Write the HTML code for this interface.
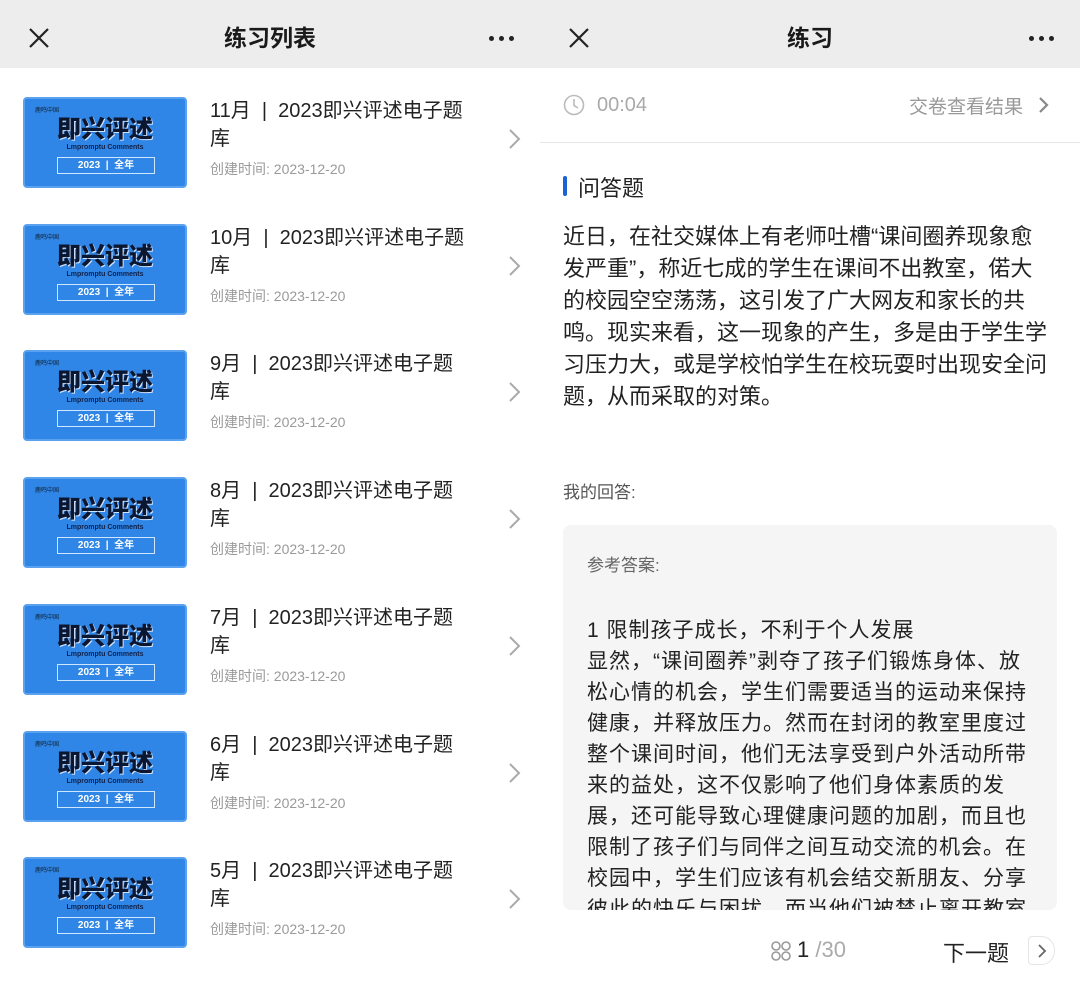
<!DOCTYPE html>
<html><head><meta charset="utf-8"><style>
*{margin:0;padding:0;box-sizing:border-box}
body{width:1080px;height:979px;overflow:hidden;background:#fff;font-family:"Liberation Sans","Noto Sans CJK SC",sans-serif;position:relative;color:#222}
.hdr{position:absolute;top:0;height:68px;background:#ededed}
.hdr .t{position:absolute;top:0;width:100%;text-align:center;line-height:76px;font-size:23px;font-weight:bold;color:#1a1a1a}
.x{position:absolute;left:28px;top:27px}
.dots{position:absolute;right:26px;top:36px;display:flex;gap:5px}
.dots i{width:5px;height:5px;border-radius:50%;background:#222;display:block}
.row{position:absolute;left:0;width:540px;height:127px}
.th{position:absolute;left:23px;top:0;width:164px;height:91px;background:#2f86e6;border:2px solid #5aa2ef;border-radius:4px;text-align:center;color:#0d1b3a}
.th .s{position:absolute;left:10px;top:6px;font-size:6px;color:#123}
.th .b{position:absolute;left:0;right:0;top:17px;font-size:24px;line-height:28px;font-weight:900;color:#0b1630;text-shadow:1px 1px 0 #cfe3ff}
.th .e{position:absolute;left:0;right:0;top:45px;font-size:7px;line-height:8px;font-weight:bold;color:#10204a}
.th .bx{position:absolute;left:32px;top:58px;width:98px;height:17px;border:1px solid #cfe6ff;color:#fff;font-size:10px;font-weight:bold;line-height:15px}
.ti{position:absolute;left:210px;top:0;width:300px;font-size:20px;line-height:28px;color:#222;white-space:nowrap}
.dt{position:absolute;left:210px;top:62px;font-size:14px;color:#9a9a9a}
.ch{position:absolute;left:508px;top:31px}
.para{position:absolute;left:563px;top:221px;font-size:22px;line-height:32px;color:#222;white-space:nowrap}
.box{position:absolute;left:563px;top:525px;width:494px;height:385px;background:#f5f5f5;border-radius:8px;overflow:hidden}
.box .a{position:absolute;left:24px;top:26px;font-size:17px;color:#666}
.box .c{position:absolute;left:24px;top:90px;font-size:21px;line-height:31px;letter-spacing:1px;color:#222;white-space:nowrap}
</style></head><body>
<div class="hdr" style="left:0;width:540px"><svg class="x" width="22" height="22"><path d="M2 2L20 20M20 2L2 20" stroke="#222" stroke-width="2.2"/></svg><div class="t">练习列表</div><div class="dots"><i></i><i></i><i></i></div></div>
<div class="hdr" style="left:540px;width:540px"><svg class="x" width="22" height="22"><path d="M2 2L20 20M20 2L2 20" stroke="#222" stroke-width="2.2"/></svg><div class="t">练习</div><div class="dots"><i></i><i></i><i></i></div></div>

<div class="row" style="top:97px"><div class="th"><div class="s">鹿鸣中国</div><div class="b">即兴评述</div><div class="e">Lmpromptu Comments</div><div class="bx">2023 &nbsp;|&nbsp; 全年</div></div><div class="ti">11月 &nbsp;| &nbsp;2023即兴评述电子题<br>库</div><div class="dt">创建时间: 2023-12-20</div><svg class="ch" width="14" height="22"><path d="M2 2L11 11L2 20" stroke="#aaa" stroke-width="2" fill="none"/></svg></div>
<div class="row" style="top:224px"><div class="th"><div class="s">鹿鸣中国</div><div class="b">即兴评述</div><div class="e">Lmpromptu Comments</div><div class="bx">2023 &nbsp;|&nbsp; 全年</div></div><div class="ti">10月 &nbsp;| &nbsp;2023即兴评述电子题<br>库</div><div class="dt">创建时间: 2023-12-20</div><svg class="ch" width="14" height="22"><path d="M2 2L11 11L2 20" stroke="#aaa" stroke-width="2" fill="none"/></svg></div>
<div class="row" style="top:350px"><div class="th"><div class="s">鹿鸣中国</div><div class="b">即兴评述</div><div class="e">Lmpromptu Comments</div><div class="bx">2023 &nbsp;|&nbsp; 全年</div></div><div class="ti">9月 &nbsp;| &nbsp;2023即兴评述电子题<br>库</div><div class="dt">创建时间: 2023-12-20</div><svg class="ch" width="14" height="22"><path d="M2 2L11 11L2 20" stroke="#aaa" stroke-width="2" fill="none"/></svg></div>
<div class="row" style="top:477px"><div class="th"><div class="s">鹿鸣中国</div><div class="b">即兴评述</div><div class="e">Lmpromptu Comments</div><div class="bx">2023 &nbsp;|&nbsp; 全年</div></div><div class="ti">8月 &nbsp;| &nbsp;2023即兴评述电子题<br>库</div><div class="dt">创建时间: 2023-12-20</div><svg class="ch" width="14" height="22"><path d="M2 2L11 11L2 20" stroke="#aaa" stroke-width="2" fill="none"/></svg></div>
<div class="row" style="top:604px"><div class="th"><div class="s">鹿鸣中国</div><div class="b">即兴评述</div><div class="e">Lmpromptu Comments</div><div class="bx">2023 &nbsp;|&nbsp; 全年</div></div><div class="ti">7月 &nbsp;| &nbsp;2023即兴评述电子题<br>库</div><div class="dt">创建时间: 2023-12-20</div><svg class="ch" width="14" height="22"><path d="M2 2L11 11L2 20" stroke="#aaa" stroke-width="2" fill="none"/></svg></div>
<div class="row" style="top:731px"><div class="th"><div class="s">鹿鸣中国</div><div class="b">即兴评述</div><div class="e">Lmpromptu Comments</div><div class="bx">2023 &nbsp;|&nbsp; 全年</div></div><div class="ti">6月 &nbsp;| &nbsp;2023即兴评述电子题<br>库</div><div class="dt">创建时间: 2023-12-20</div><svg class="ch" width="14" height="22"><path d="M2 2L11 11L2 20" stroke="#aaa" stroke-width="2" fill="none"/></svg></div>
<div class="row" style="top:857px"><div class="th"><div class="s">鹿鸣中国</div><div class="b">即兴评述</div><div class="e">Lmpromptu Comments</div><div class="bx">2023 &nbsp;|&nbsp; 全年</div></div><div class="ti">5月 &nbsp;| &nbsp;2023即兴评述电子题<br>库</div><div class="dt">创建时间: 2023-12-20</div><svg class="ch" width="14" height="22"><path d="M2 2L11 11L2 20" stroke="#aaa" stroke-width="2" fill="none"/></svg></div>

<div style="position:absolute;left:540px;top:142px;width:540px;height:1px;background:#e6e6e6"></div>
<svg style="position:absolute;left:563px;top:94px" width="22" height="22"><circle cx="11" cy="11" r="9.5" stroke="#bbb" stroke-width="1.6" fill="none"/><path d="M11 5V11.5L15 14" stroke="#bbb" stroke-width="1.6" fill="none"/></svg>
<div style="position:absolute;left:597px;top:94px;font-size:20px;color:#aaa">00:04</div>
<div style="position:absolute;left:909px;top:92px;font-size:19px;color:#999">交卷查看结果</div>
<svg style="position:absolute;left:1038px;top:96px" width="12" height="18"><path d="M2 2L9 9L2 16" stroke="#888" stroke-width="2.2" fill="none"/></svg>
<div style="position:absolute;left:563px;top:176px;width:4px;height:20px;background:#1d62d4;border-radius:2px"></div>
<div style="position:absolute;left:578px;top:171px;font-size:22px;color:#222">问答题</div>
<div class="para">近日，在社交媒体上有老师吐槽“课间圈养现象愈<br>发严重”，称近七成的学生在课间不出教室，偌大<br>的校园空空荡荡，这引发了广大网友和家长的共<br>鸣。现实来看，这一现象的产生，多是由于学生学<br>习压力大，或是学校怕学生在校玩耍时出现安全问<br>题，从而采取的对策。</div>
<div style="position:absolute;left:563px;top:478px;font-size:17px;color:#555">我的回答:</div>
<div class="box"><div class="a">参考答案:</div><div class="c">1 限制孩子成长，不利于个人发展<br>显然，“课间圈养”剥夺了孩子们锻炼身体、放<br>松心情的机会，学生们需要适当的运动来保持<br>健康，并释放压力。然而在封闭的教室里度过<br>整个课间时间，他们无法享受到户外活动所带<br>来的益处，这不仅影响了他们身体素质的发<br>展，还可能导致心理健康问题的加剧，而且也<br>限制了孩子们与同伴之间互动交流的机会。在<br>校园中，学生们应该有机会结交新朋友、分享<br>彼此的快乐与困扰，而当他们被禁止离开教室</div></div>
<div style="position:absolute;left:540px;top:910px;width:540px;height:69px;background:#fff"></div>
<svg style="position:absolute;left:770px;top:940px" width="22" height="22"><circle cx="6" cy="6" r="4" stroke="#999" stroke-width="1.6" fill="none"/><circle cx="16" cy="6" r="4" stroke="#999" stroke-width="1.6" fill="none"/><circle cx="6" cy="16" r="4" stroke="#999" stroke-width="1.6" fill="none"/><circle cx="16" cy="16" r="4" stroke="#999" stroke-width="1.6" fill="none"/></svg>
<div style="position:absolute;left:797px;top:937px;font-size:22px;color:#222">1 <span style="color:#aaa">/30</span></div>
<div style="position:absolute;left:943px;top:936px;font-size:22px;color:#222">下一题</div>
<div style="position:absolute;left:1028px;top:936px;width:27px;height:29px;border:1px solid #e5e5e5;border-radius:4px 14px 14px 4px;background:#fff"></div>
<svg style="position:absolute;left:1036px;top:943px" width="12" height="16"><path d="M3 2L9 8L3 14" stroke="#666" stroke-width="1.8" fill="none"/></svg>
</body></html>
